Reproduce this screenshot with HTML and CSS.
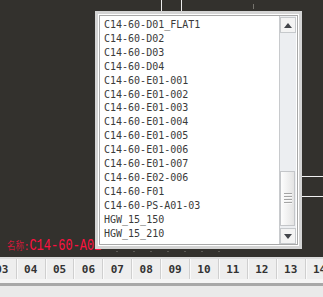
FILE: index.html
```html
<!doctype html>
<html lang="en">
    <head>
        <meta charset="UTF-8" />
        <title>Part picker</title>
        <link rel="stylesheet" href="styles.css">
    </head>
    <body>
        <div class="stage">
            <span class="vtick vtick-a"></span>
            <span class="vtick vtick-b"></span>
            <span class="vtick vtick-c"></span>
            <span class="hline hline-a"></span>
            <span class="hline hline-b"></span>
            <span class="track-dots"></span>

            <div class="name-label"><span class="cjk">名称</span><span class="colon">:</span>C14-60-A02</div>

            <div class="popup">
                <div class="popup-frame">
                    <div class="listbox">
                        <ul class="items">
                            <li>C14-60-D01_FLAT1</li>
                            <li>C14-60-D02</li>
                            <li>C14-60-D03</li>
                            <li>C14-60-D04</li>
                            <li>C14-60-E01-001</li>
                            <li>C14-60-E01-002</li>
                            <li>C14-60-E01-003</li>
                            <li>C14-60-E01-004</li>
                            <li>C14-60-E01-005</li>
                            <li>C14-60-E01-006</li>
                            <li>C14-60-E01-007</li>
                            <li>C14-60-E02-006</li>
                            <li>C14-60-F01</li>
                            <li>C14-60-PS-A01-03</li>
                            <li>HGW_15_150</li>
                            <li>HGW_15_210</li>
                        </ul>
                        <div class="scrollbar">
                            <div class="sb-btn"><span class="arrow up"></span></div>
                            <div class="sb-track">
                                <div class="sb-thumb"><span class="grip"></span></div>
                            </div>
                            <div class="sb-btn"><span class="arrow down"></span></div>
                        </div>
                    </div>
                </div>
            </div>
        </div>

        <div class="ruler">
            <div class="cell">03</div>
            <div class="cell">04</div>
            <div class="cell">05</div>
            <div class="cell">06</div>
            <div class="cell">07</div>
            <div class="cell">08</div>
            <div class="cell">09</div>
            <div class="cell">10</div>
            <div class="cell">11</div>
            <div class="cell">12</div>
            <div class="cell">13</div>
            <div class="cell">14</div>
        </div>

        <div class="footer"></div>
    </body>
</html>
```

FILE: styles.css
```css
* {
    margin: 0;
    padding: 0;
    box-sizing: border-box;
}

body {
    background: #33312d;
    font-family: "DejaVu Sans Mono", monospace;
    overflow: hidden;
}

.stage {
    position: relative;
    height: 257px;
    background: #33312d;
}

/* canvas marks behind the popup */
.vtick {
    position: absolute;
    top: 0;
    width: 1px;
    height: 11px;
    background: #ececec;
}

.vtick-a { left: 161px; }
.vtick-b { left: 181px; }

.vtick-c {
    left: 253px;
    top: 4px;
    height: 5px;
    background: #75736d;
}

.hline {
    position: absolute;
    left: 302px;
    right: 0;
    height: 1px;
    background: #f0f0f0;
}

.hline-a { top: 176px; }
.hline-b { top: 196px; }

.track-dots {
    position: absolute;
    left: 116px;
    top: 251px;
    width: 116px;
    height: 1px;
    background: repeating-linear-gradient(to right, #5c5a55 0 2px, transparent 2px 17px);
}

.name-label {
    position: absolute;
    left: 7px;
    top: 241px;
    color: #ff1040;
    font-family: "Liberation Mono", monospace;
    font-size: 12px;
    line-height: 14px;
    white-space: nowrap;
    transform: scaleY(1.3);
    transform-origin: left bottom;
}

.name-label .cjk {
    font-family: "Noto Sans CJK SC", sans-serif;
    font-size: 8.5px;
    font-weight: 300;
}

.name-label .colon {
    font-size: 9px;
}

/* dropdown list */
.popup {
    position: absolute;
    left: 95px;
    top: 11px;
    width: 207px;
    height: 238px;
    padding: 3px;
    background: #d4d4d4;
}

.popup-frame {
    height: 100%;
    border: 1px solid #fff;
}

.listbox {
    display: flex;
    height: 100%;
    border: 1px solid #a8a8a8;
    background: #fff;
}

.items {
    flex: 1;
    list-style: none;
    padding: 2px 0 0 4px;
    font-size: 10px;
    line-height: 13.9px;
    color: #3a3a3a;
    white-space: nowrap;
}

.scrollbar {
    display: flex;
    flex-direction: column;
    width: 17px;
    margin-right: 1px;
    padding-top: 1px;
    border-left: 1px solid #c8cacd;
    background: #eceef1;
}

.sb-btn {
    display: flex;
    align-items: center;
    justify-content: center;
    height: 16px;
    border: 1px solid #c6c9cc;
    background: #f3f3f3;
}

.arrow {
    width: 0;
    height: 0;
    border-left: 4px solid transparent;
    border-right: 4px solid transparent;
}

.arrow.up {
    border-bottom: 5px solid #42454a;
}

.arrow.down {
    border-top: 5px solid #42454a;
}

.sb-track {
    flex: 1;
}

.sb-thumb {
    display: flex;
    justify-content: center;
    height: 55px;
    margin: 138px 1px 0 0;
    padding-top: 21px;
    border: 1px solid #c4c6c9;
    background: linear-gradient(to right, #fdfdfd, #e4e4e4);
}

.grip {
    width: 8px;
    height: 11px;
    background: repeating-linear-gradient(#a4a4a4 0 1px, #fafafa 1px 2px, transparent 2px 3px);
}

/* hour ruler */
.ruler {
    display: flex;
    height: 22px;
    margin-left: -12.2px;
    border-top: 2px solid #dcdcdc;
    background: #eeeeee;
}

.cell {
    flex: 0 0 28.9px;
    padding-top: 3px;
    border-right: 1px solid #cfcfcf;
    box-shadow: inset 1px 0 #fafafa;
    font-weight: bold;
    font-size: 11px;
    line-height: 16px;
    text-align: center;
    color: #333;
}

.footer {
    height: 18px;
    border-top: 4px solid #f5f5f5;
    background: linear-gradient(#a8a8a8 0 3px, #eaeaea 3px);
}
```
